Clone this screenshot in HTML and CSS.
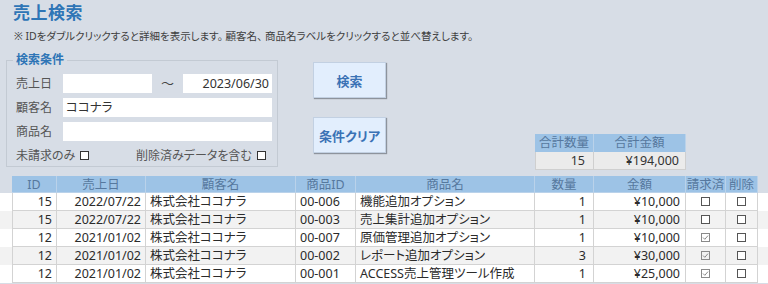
FILE: index.html
```html
<!DOCTYPE html>
<html lang="ja">
<head>
<meta charset="utf-8">
<title>売上検索</title>
<link rel="stylesheet" href="styles.css">
</head>
<body>
<header class="page-head">
  <h1 class="title">売上検索</h1>
  <p class="note">※ IDをダブルクリックすると詳細を表示します。 顧客名、 商品名ラベルをクリックすると並べ替えします。</p>
</header>

<section class="search">
  <fieldset class="cond">
    <legend class="legend">検索条件</legend>
    <div class="cond-grid">
      <span class="lbl">売上日</span>
      <div class="inp"></div>
      <span class="tilde">～</span>
      <div class="inp num">2023/06/30</div>

      <span class="lbl">顧客名</span>
      <div class="inp wide">ココナラ</div>

      <span class="lbl">商品名</span>
      <div class="inp wide"></div>

      <div class="checks">
        <span class="chk-group first"><span class="lbl">未請求のみ</span><span class="box"></span></span>
        <span class="chk-group"><span class="lbl">削除済みデータを含む</span><span class="box"></span></span>
      </div>
    </div>
  </fieldset>

  <div class="buttons">
    <button class="btn" type="button">検索</button>
    <button class="btn" type="button">条件クリア</button>
  </div>

  <div class="summary">
    <div class="sh">合計数量</div>
    <div class="sh">合計金額</div>
    <div class="sv">15</div>
    <div class="sv">¥194,000</div>
  </div>
</section>

<div class="list">
  <div class="row head">
    <div class="c">ID</div><div class="c">売上日</div><div class="c">顧客名</div><div class="c">商品ID</div><div class="c">商品名</div><div class="c">数量</div><div class="c">金額</div><div class="c">請求済</div><div class="c">削除</div>
  </div>
  <div class="row odd">
    <div class="c r">15</div><div class="c r">2022/07/22</div><div class="c">株式会社ココナラ</div><div class="c">00-006</div><div class="c">機能追加オプション</div><div class="c r qty">1</div><div class="c r amt">¥10,000</div><div class="c ctr"><span class="tbox"></span></div><div class="c ctr"><span class="tbox"></span></div>
  </div>
  <div class="row even">
    <div class="c r">15</div><div class="c r">2022/07/22</div><div class="c">株式会社ココナラ</div><div class="c">00-003</div><div class="c">売上集計追加オプション</div><div class="c r qty">1</div><div class="c r amt">¥10,000</div><div class="c ctr"><span class="tbox"></span></div><div class="c ctr"><span class="tbox"></span></div>
  </div>
  <div class="row odd">
    <div class="c r">12</div><div class="c r">2021/01/02</div><div class="c">株式会社ココナラ</div><div class="c">00-007</div><div class="c">原価管理追加オプション</div><div class="c r qty">1</div><div class="c r amt">¥10,000</div><div class="c ctr"><svg class="tcheck" width="9" height="9" viewBox="0 0 9 9"><rect x="0.5" y="0.5" width="8" height="8" fill="none" stroke="#8a8a8a"/><polyline points="2,4.5 3.8,6.3 7,2.6" fill="none" stroke="#8a8a8a" stroke-width="1"/></svg></div><div class="c ctr"><span class="tbox"></span></div>
  </div>
  <div class="row even">
    <div class="c r">12</div><div class="c r">2021/01/02</div><div class="c">株式会社ココナラ</div><div class="c">00-002</div><div class="c">レポート追加オプション</div><div class="c r qty">3</div><div class="c r amt">¥30,000</div><div class="c ctr"><svg class="tcheck" width="9" height="9" viewBox="0 0 9 9"><rect x="0.5" y="0.5" width="8" height="8" fill="none" stroke="#8a8a8a"/><polyline points="2,4.5 3.8,6.3 7,2.6" fill="none" stroke="#8a8a8a" stroke-width="1"/></svg></div><div class="c ctr"><span class="tbox"></span></div>
  </div>
  <div class="row odd">
    <div class="c r">12</div><div class="c r">2021/01/02</div><div class="c">株式会社ココナラ</div><div class="c">00-001</div><div class="c">ACCESS売上管理ツール作成</div><div class="c r qty">1</div><div class="c r amt">¥25,000</div><div class="c ctr"><svg class="tcheck" width="9" height="9" viewBox="0 0 9 9"><rect x="0.5" y="0.5" width="8" height="8" fill="none" stroke="#8a8a8a"/><polyline points="2,4.5 3.8,6.3 7,2.6" fill="none" stroke="#8a8a8a" stroke-width="1"/></svg></div><div class="c ctr"><span class="tbox"></span></div>
  </div>
</div>
</body>
</html>
```

FILE: styles.css
```css
* { box-sizing: border-box; }

html, body {
  margin: 0;
  padding: 0;
}

body {
  width: 768px;
  height: 284px;
  overflow: hidden;
  background: #d7dde6;
  color: #333;
  font-family: "Noto Sans", "Noto Sans CJK JP", sans-serif;
  font-feature-settings: "palt";
}

.title {
  margin: 0;
  padding-left: 13px;
  height: 26px;
  font-size: 17px;
  line-height: 26px;
  font-weight: bold;
  color: #2e75b6;
  letter-spacing: 0.5px;
}

.note {
  margin: 1px 0 0;
  padding-left: 14px;
  height: 18px;
  font-size: 10.5px;
  line-height: 18px;
  color: #404040;
  white-space: nowrap;
}

.search {
  display: flex;
  height: 125px;
  padding: 5px 0 0 6px;
}

.cond {
  margin: 0;
  width: 272px;
  height: 117px;
  align-self: flex-start;
  border: 1px solid #c3cad3;
  padding: 0 5px 1px 9px;
}

.legend {
  margin-left: -3px;
  padding: 0 3px;
  font-size: 12px;
  line-height: 20px;
  font-weight: bold;
  color: #2e75b6;
}

.cond-grid {
  display: grid;
  grid-template-columns: 47px 89px 31px 89px;
  grid-auto-rows: 19px;
  row-gap: 5px;
  padding-top: 4px;
}

.lbl {
  font-size: 12px;
  line-height: 19px;
  color: #555;
  white-space: nowrap;
}

.inp {
  background: #fff;
  height: 19px;
  font-size: 12.5px;
  line-height: 19px;
  color: #333;
  padding: 0 3px;
  white-space: nowrap;
}

.inp.num { text-align: right; padding-right: 3px; }
.inp.wide { grid-column: 2 / 5; }

.tilde {
  text-align: center;
  font-size: 13px;
  line-height: 19px;
  color: #444;
}

.checks {
  grid-column: 1 / 5;
  display: flex;
  align-items: center;
}

.chk-group {
  display: flex;
  align-items: center;
}

.chk-group.first { width: 120px; }

.box {
  display: inline-block;
  width: 9px;
  height: 9px;
  border: 1px solid #333;
  background: #fff;
  margin-left: 5px;
}

.buttons {
  display: flex;
  flex-direction: column;
  gap: 19px;
  margin: 12px 0 0 35px;
}

.btn {
  width: 73px;
  height: 36px;
  padding: 0;
  background: #e2eefd;
  border: 1px solid #c2d0e2;
  box-shadow: 1px 1px 1px #8d939c;
  font-family: "Noto Sans CJK JP", sans-serif;
  font-feature-settings: "palt";
  font-size: 13px;
  font-weight: bold;
  color: #3a72b5;
}

.summary {
  align-self: flex-end;
  margin-left: 149px;
  display: grid;
  grid-template-columns: 59px 92px;
  grid-auto-rows: 18px;
}

.sh {
  background: #9dc3e6;
  color: #56789e;
  font-size: 12.5px;
  line-height: 18px;
  text-align: center;
  border-right: 1px solid #bad2ea;
}

.sv {
  background: #ebebeb;
  border-right: 1px solid #cfcfcf;
  border-bottom: 1px solid #cfcfcf;
  font-size: 12.5px;
  line-height: 17px;
  text-align: right;
  padding-right: 6px;
  color: #333;
}

.summary .sv:nth-child(3) { border-left: 1px solid #cfcfcf; padding-right: 8px; }

.list {
  margin-top: 6px;
}

.row {
  display: grid;
  grid-template-columns: 45px 89px 150px 60px 179px 59px 92px 40px 32px;
  height: 18px;
  padding-left: 12px;
}

.row.head { height: 17px; }
.row.odd { background: #fff; }
.row.even { background: #f2f2f2; }

.c {
  border-right: 1px solid #d3d3d3;
  border-bottom: 1px solid #d3d3d3;
  font-size: 12.5px;
  line-height: 17px;
  padding: 0 4px;
  white-space: nowrap;
  overflow: hidden;
  color: #2b2b2b;
}

.c:first-child { border-left: 1px solid #d3d3d3; }

.head .c {
  background: #9dc3e6;
  color: #56789e;
  text-align: center;
  border-color: #bad2ea;
  line-height: 17px;
  padding: 0;
}

.head .c:first-child { border-left: none; }

.r { text-align: right; }
.qty { padding-right: 7px; }
.amt { padding-right: 5px; }

.ctr {
  display: flex;
  align-items: center;
  justify-content: center;
  padding: 0;
}

.tbox {
  display: block;
  width: 9px;
  height: 9px;
  border: 1px solid #555;
  background: #fff;
}

.tcheck { display: block; }
```
